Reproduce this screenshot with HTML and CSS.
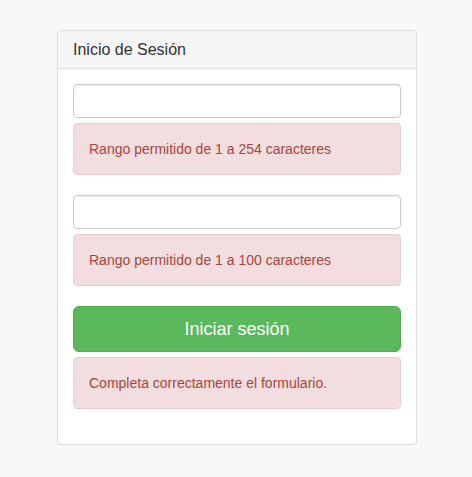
FILE: index.html
```html
<!DOCTYPE html>
<html lang="es">
<head>
<meta charset="utf-8">
<title>Inicio de Sesión</title>
<link rel="stylesheet" href="styles.css">
</head>
<body>
<div class="wrap">
  <div class="panel">
    <div class="panel-heading"><h3 class="panel-title">Inicio de Sesión</h3></div>
    <div class="panel-body">
      <input class="form-control" type="text">
      <div class="alert">Rango permitido de 1 a 254 caracteres</div>
      <input class="form-control" type="password">
      <div class="alert">Rango permitido de 1 a 100 caracteres</div>
      <button class="btn">Iniciar sesión</button>
      <div class="alert">Completa correctamente el formulario.</div>
    </div>
  </div>
</div>
</body>
</html>
```
FILE: styles.css
```css
* { box-sizing: border-box; }
html, body { margin: 0; padding: 0; }
body {
  background: #f8f8f8;
  font-family: "Liberation Sans", Arial, sans-serif;
  font-size: 14px;
  line-height: 20px;
  color: #333;
}
.wrap { padding: 30px 0 0 57px; }
.panel {
  width: 360px;
  background: #fff;
  border: 1px solid #ddd;
  border-radius: 4px;
  box-shadow: 0 1px 1px rgba(0,0,0,.05);
}
.panel-heading {
  background: #f5f5f5;
  border-bottom: 1px solid #ddd;
  border-radius: 3px 3px 0 0;
  padding: 10px 15px;
}
.panel-title {
  margin: 0;
  font-size: 16px;
  font-weight: normal;
  line-height: 17px;
  color: #333;
}
.panel-body { padding: 15px 15px 15px; display: flex; flex-direction: column; }
.form-control {
  display: block;
  width: 100%;
  height: 34px;
  margin: 0;
  padding: 6px 12px;
  border: 1px solid #ccc;
  border-radius: 4px;
  background: #fff;
  box-shadow: inset 0 1px 1px rgba(0,0,0,.075);
  font: inherit;
}
.alert {
  margin-top: 5px;
  margin-bottom: 20px;
  padding: 15px;
  background: #f2dede;
  border: 1px solid #ebccd1;
  border-radius: 4px;
  color: #a94442;
}
.btn {
  display: block;
  width: 100%;
  height: 46px;
  padding: 10px 16px;
  font-family: inherit;
  font-size: 18px;
  line-height: 24px;
  color: #fff;
  background: #5cb85c;
  border: 1px solid #4cae4c;
  border-radius: 6px;
  text-align: center;
}
```
